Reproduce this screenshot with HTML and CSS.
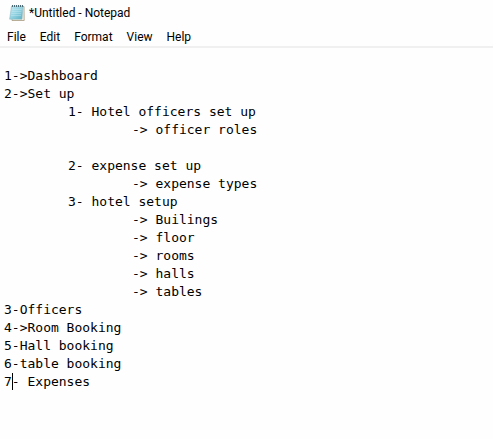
FILE: index.html
```html
<!DOCTYPE html>
<html lang="en">
<head>
<meta charset="utf-8">
<meta name="viewport" content="width=device-width, initial-scale=1">
<title>*Untitled - Notepad</title>
<link rel="stylesheet" href="styles.css">
</head>
<body>
<header class="titlebar">
  <svg class="app-icon" viewBox="0 0 16 18" aria-hidden="true">
    <defs>
      <linearGradient id="page" x1="0" y1="0" x2="1" y2="1">
        <stop offset="0" stop-color="#c4eaf2"/>
        <stop offset="0.5" stop-color="#93d3e2"/>
        <stop offset="1" stop-color="#58afc4"/>
      </linearGradient>
    </defs>
    <path d="M3 2.5 15 2.5 15.2 16.5 3 16.5Z" fill="#f3eee2" stroke="#a99a80" stroke-width="0.8"/>
    <path d="M2.5 2H14L13 15.2H0.6Z" fill="url(#page)" stroke="#8ab4be" stroke-width="0.5"/>
    <path d="M3 5.5H12.6M2.7 7.5H12.4M2.4 9.5H12.2M2.1 11.5H12" stroke="#d5f1f6" stroke-width="0.5" opacity="0.7"/>
    <path d="M3.5 1V3M5.5 1V3M7.5 1V3M9.5 1V3M11.5 1V3M13.5 1V3" stroke="#4c6a73" stroke-width="1"/>
  </svg>
  <h1 class="title">*Untitled - Notepad</h1>
</header>
<nav class="menubar" aria-label="Menu">
  <button type="button" class="menu-item">File</button>
  <button type="button" class="menu-item">Edit</button>
  <button type="button" class="menu-item">Format</button>
  <button type="button" class="menu-item">View</button>
  <button type="button" class="menu-item">Help</button>
</nav>
<main class="editor">
  <textarea class="text" aria-label="Document text" spellcheck="false" wrap="off">

1->Dashboard
2->Set up
	1- Hotel officers set up
		-> officer roles

	2- expense set up
		-> expense types
	3- hotel setup
		-> Builings
		-> floor
		-> rooms
		-> halls
		-> tables
3-Officers
4->Room Booking
5-Hall booking
6-table booking
7- Expenses</textarea>
  <span class="caret" aria-hidden="true"></span>
</main>
</body>
</html>
```
FILE: styles.css
```css
* {
  box-sizing: border-box;
}

body {
  margin: 0;
  min-height: 100vh;
  display: flex;
  flex-direction: column;
  background: #fefefe;
  color: #000;
  font-family: Roboto, "Open Sans", sans-serif;
}

.titlebar {
  display: flex;
  align-items: center;
  gap: 4px;
  height: 25px;
  padding-left: 9px;
}

.app-icon {
  width: 16px;
  height: 18px;
}

.title {
  margin: 0;
  font-size: 12px;
  font-weight: 400;
}

.menubar {
  display: flex;
  gap: 14px;
  padding: 3px 7px 0;
  border-bottom: 2px solid #f0f0f0;
}

.menu-item {
  padding: 0;
  border: 0;
  background: none;
  color: inherit;
  font: inherit;
  font-size: 12px;
  line-height: 18px;
}

.editor {
  position: relative;
  flex: 1;
  display: flex;
  padding-top: 1px;
  font-family: "DejaVu Sans Mono", monospace;
  font-size: 13px;
  line-height: 18px;
}

.text {
  flex: 1;
  min-width: 0;
  padding: 0 4px;
  border: 0;
  outline: 0;
  resize: none;
  overflow: hidden;
  background: none;
  color: inherit;
  font: inherit;
  tab-size: 64px;
}

.caret {
  position: absolute;
  top: calc(1px + 18 * 18px);
  left: calc(4px + 1ch);
  width: 1px;
  height: 17px;
  background: #000;
}
```
